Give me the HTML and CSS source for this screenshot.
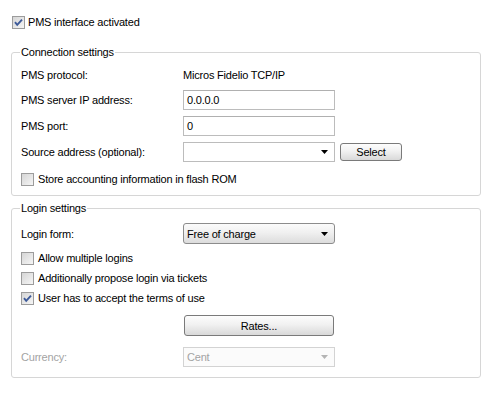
FILE: index.html
```html
<!DOCTYPE html>
<html>
<head>
<meta charset="utf-8">
<link rel="stylesheet" href="styles.css">
</head>
<body>
<div class="page">
  <div class="check top-check">
    <svg class="cb" width="13" height="13" viewBox="0 0 13 13"><defs><linearGradient id="g1" x1="0" y1="0" x2="1" y2="1"><stop offset="0" stop-color="#d4d4d4"/><stop offset="1" stop-color="#f7f7f7"/></linearGradient></defs><rect x="0.5" y="0.5" width="12" height="12" fill="url(#g1)" stroke="#9c9c9c"/><polyline points="3,6.2 5.2,8.8 10,3.6" fill="none" stroke="#3d5a99" stroke-width="1.9"/></svg>
    <span>PMS interface activated</span>
  </div>

  <fieldset class="group conn">
    <legend>Connection settings</legend>
    <div class="row r20 proto">
      <span class="lbl">PMS protocol:</span>
      <span class="val">Micros Fidelio TCP/IP</span>
    </div>
    <div class="row r20 gap6">
      <span class="lbl">PMS server IP address:</span>
      <div class="input">0.0.0.0</div>
    </div>
    <div class="row r20 gap6">
      <span class="lbl">PMS port:</span>
      <div class="input">0</div>
    </div>
    <div class="row r20 gap6">
      <span class="lbl">Source address (optional):</span>
      <div class="combo edit"><span></span><svg class="arrow" width="7" height="4" viewBox="0 0 7 4"><polygon points="0,0 7,0 3.5,4" fill="#000"/></svg></div>
      <div class="btn select">Select</div>
    </div>
    <div class="check in-group store">
      <svg class="cb" width="13" height="13" viewBox="0 0 13 13"><defs><linearGradient id="g2" x1="0" y1="0" x2="1" y2="1"><stop offset="0" stop-color="#d4d4d4"/><stop offset="1" stop-color="#f7f7f7"/></linearGradient></defs><rect x="0.5" y="0.5" width="12" height="12" fill="url(#g2)" stroke="#9c9c9c"/></svg>
      <span>Store accounting information in flash ROM</span>
    </div>
  </fieldset>

  <fieldset class="group login">
    <legend>Login settings</legend>
    <div class="row r21 first-login">
      <span class="lbl">Login form:</span>
      <div class="combo list"><span>Free of charge</span><svg class="arrow" width="7" height="4" viewBox="0 0 7 4"><polygon points="0,0 7,0 3.5,4" fill="#000"/></svg></div>
    </div>
    <div class="checks">
      <div class="check in-group r20">
        <svg class="cb" width="13" height="13" viewBox="0 0 13 13"><defs><linearGradient id="g3" x1="0" y1="0" x2="1" y2="1"><stop offset="0" stop-color="#d4d4d4"/><stop offset="1" stop-color="#f7f7f7"/></linearGradient></defs><rect x="0.5" y="0.5" width="12" height="12" fill="url(#g3)" stroke="#9c9c9c"/></svg>
        <span>Allow multiple logins</span>
      </div>
      <div class="check in-group r20">
        <svg class="cb" width="13" height="13" viewBox="0 0 13 13"><defs><linearGradient id="g4" x1="0" y1="0" x2="1" y2="1"><stop offset="0" stop-color="#d4d4d4"/><stop offset="1" stop-color="#f7f7f7"/></linearGradient></defs><rect x="0.5" y="0.5" width="12" height="12" fill="url(#g4)" stroke="#9c9c9c"/></svg>
        <span>Additionally propose login via tickets</span>
      </div>
      <div class="check in-group r20">
        <svg class="cb" width="13" height="13" viewBox="0 0 13 13"><defs><linearGradient id="g5" x1="0" y1="0" x2="1" y2="1"><stop offset="0" stop-color="#d4d4d4"/><stop offset="1" stop-color="#f7f7f7"/></linearGradient></defs><rect x="0.5" y="0.5" width="12" height="12" fill="url(#g5)" stroke="#9c9c9c"/><polyline points="3,6.2 5.2,8.8 10,3.6" fill="none" stroke="#3d5a99" stroke-width="1.9"/></svg>
        <span>User has to accept the terms of use</span>
      </div>
    </div>
    <div class="row r21 rates-row">
      <span class="lbl"></span>
      <div class="btn rates">Rates...</div>
    </div>
    <div class="row r20 cur-row">
      <span class="lbl disabled">Currency:</span>
      <div class="combo dis"><span>Cent</span><svg class="arrow" width="7" height="4" viewBox="0 0 7 4"><polygon points="0,0 7,0 3.5,4" fill="#b4b4b4"/></svg></div>
    </div>
  </fieldset>
</div>
</body>
</html>
```

FILE: styles.css
```css
html, body {
  margin: 0;
  padding: 0;
  background: #ffffff;
}

body {
  font-family: "Liberation Sans", Arial, sans-serif;
  font-size: 11px;
  letter-spacing: -0.2px;
  color: #000;
}

.page {
  display: flex;
  flex-direction: column;
  padding-top: 15px;
}

.check {
  display: flex;
  align-items: center;
  height: 14px;
}

.check .cb {
  flex: none;
  display: block;
}

.check span {
  margin-left: 4px;
  line-height: 14px;
  white-space: nowrap;
}

.top-check {
  margin-left: 12px;
}

.top-check span {
  margin-left: 3px;
}

.group {
  margin: 0 0 0 11px;
  width: 470px;
  box-sizing: border-box;
  border: 1px solid #d6d6d6;
  border-radius: 3px;
  padding: 5px 8px 9px 9px;
  min-width: 0;
}

.group legend {
  padding: 0 1px;
  margin-left: -1px;
  line-height: 14px;
  height: 14px;
}

.conn {
  margin-top: 16px;
}

.login {
  margin-top: 5px;
  padding-bottom: 10px;
}

.row {
  display: flex;
  align-items: center;
}

.r20 { height: 20px; }
.r21 { height: 21px; }
.gap6 { margin-top: 6px; }

.proto {
  margin-top: 1px;
}

.proto + .gap6 {
  margin-top: 5px;
}

.lbl {
  width: 162px;
  flex: none;
  white-space: nowrap;
}

.val {
  white-space: nowrap;
}

.disabled {
  color: #a3a3a3;
}

.input {
  width: 152px;
  height: 20px;
  box-sizing: border-box;
  border: 1px solid #bcbcbc;
  border-top-color: #b0b0b0;
  background: #fff;
  padding-left: 3px;
  display: flex;
  align-items: center;
}

.combo {
  width: 152px;
  height: 20px;
  box-sizing: border-box;
  border: 1px solid #bcbcbc;
  background: #fff;
  display: flex;
  align-items: center;
  justify-content: space-between;
  padding: 0 6px 0 3px;
}

.combo .arrow {
  display: block;
  flex: none;
}

.combo.list {
  height: 21px;
  border: 1px solid #8c8c8c;
  border-radius: 3px;
  background: linear-gradient(#fbfbfb, #f0f0f0 45%, #dcdcdc);
}

.combo.dis {
  border-color: #d3d3d3;
  color: #a3a3a3;
  background: #fbfbfb;
}

.btn {
  box-sizing: border-box;
  border: 1px solid #7a7a7a;
  border-radius: 3px;
  background: linear-gradient(#fdfdfd, #f1f1f1 45%, #d9d9d9);
  display: flex;
  align-items: center;
  justify-content: center;
}

.select {
  width: 62px;
  height: 18px;
  margin-left: 5px;
}

.store {
  margin-top: 10px;
}

.first-login {
  margin-top: 3px;
}

.checks {
  display: flex;
  flex-direction: column;
  margin-top: 4px;
}

.checks .check {
  height: 20px;
}

.rates-row {
  margin-top: 7px;
}

.rates {
  width: 150px;
  height: 21px;
  margin-left: 1px;
}

.cur-row {
  margin-top: 11px;
}
```
